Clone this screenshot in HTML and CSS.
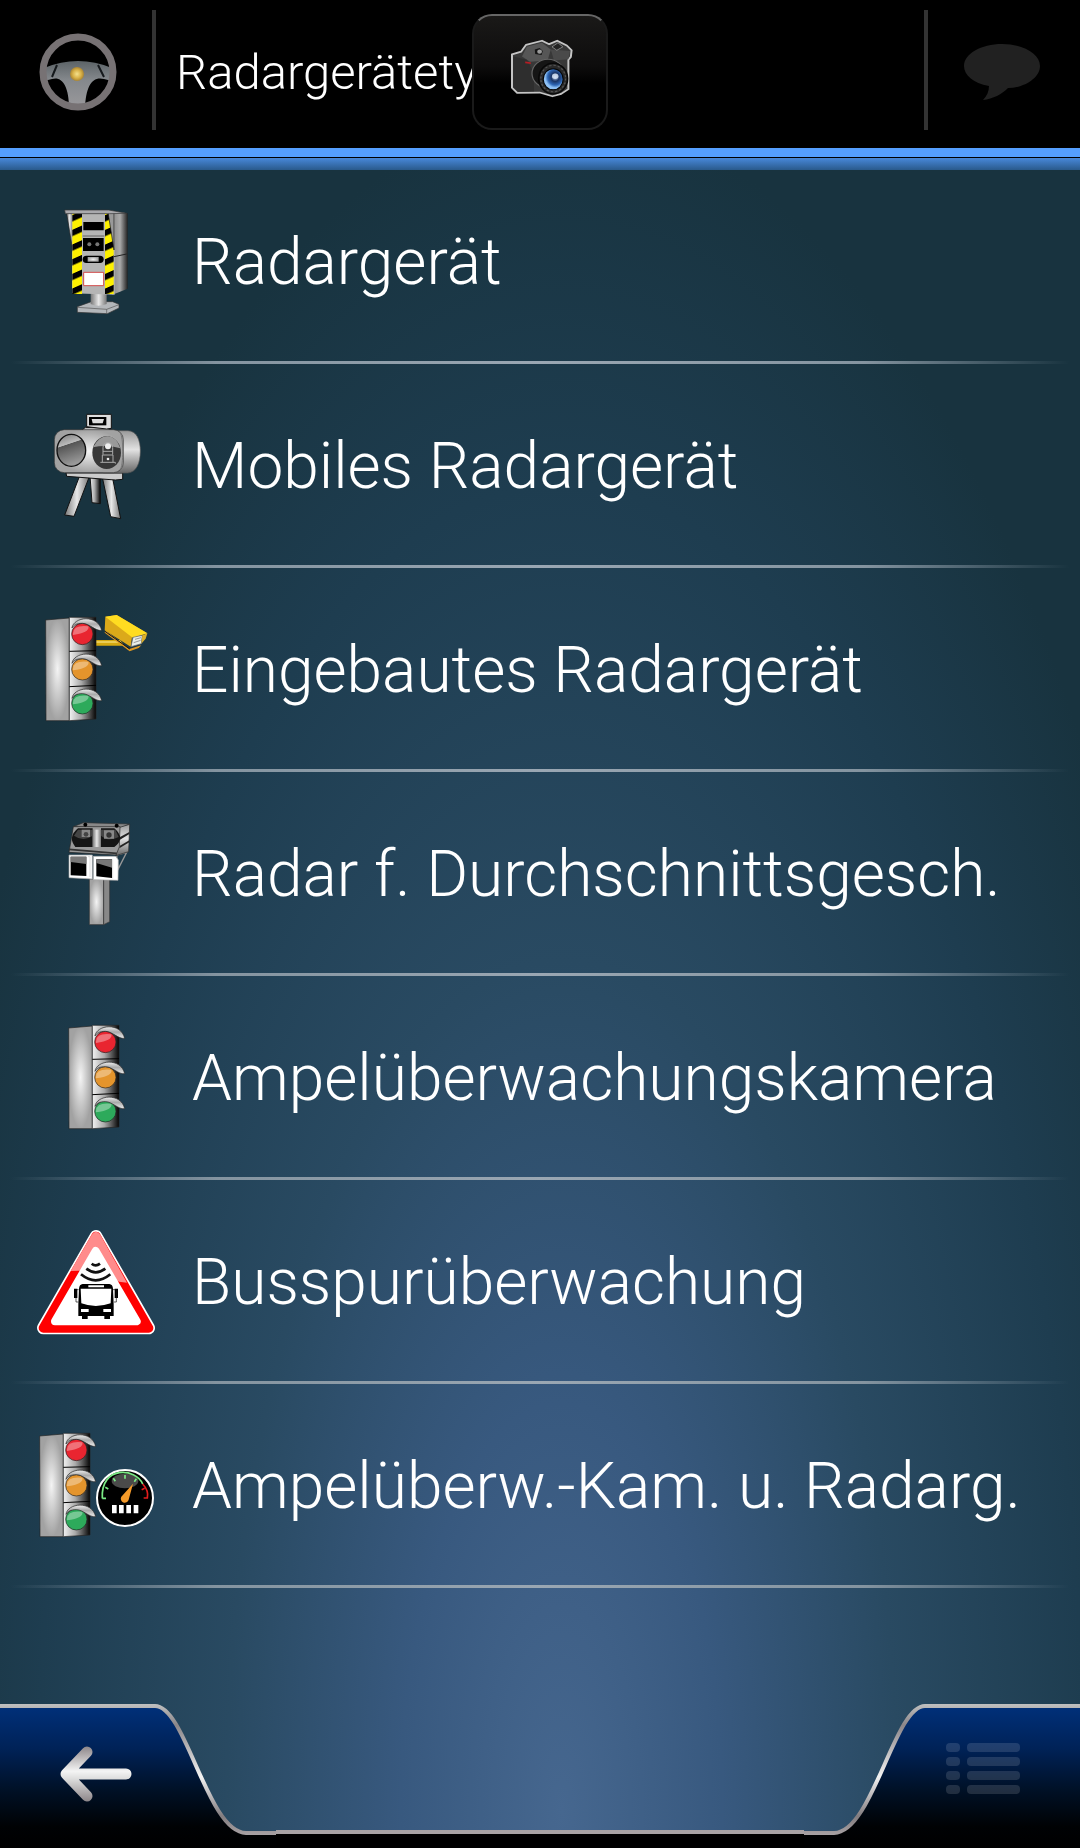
FILE: index.html
```
<!DOCTYPE html>
<html lang="de">
<head>
<meta charset="utf-8">
<meta name="viewport" content="width=device-width, initial-scale=1">
<title>Radargerätety</title>
<link rel="stylesheet" href="styles.css">
</head>
<body>
<svg class="defs" width="0" height="0" aria-hidden="true">
  <defs>
    <linearGradient id="steel"><stop offset="0" stop-color="#777"/><stop offset=".5" stop-color="#e8e8e8"/><stop offset="1" stop-color="#777"/></linearGradient>
    <linearGradient id="steelDark"><stop offset="0" stop-color="#f2f2f2"/><stop offset=".45" stop-color="#aaa"/><stop offset="1" stop-color="#050505"/></linearGradient>
    <linearGradient id="steelSide"><stop offset="0" stop-color="#222"/><stop offset=".2" stop-color="#888"/><stop offset=".6" stop-color="#aaa"/><stop offset="1" stop-color="#222"/></linearGradient>
    <linearGradient id="steelDown" x2="0" y2="1"><stop offset="0" stop-color="#999"/><stop offset=".45" stop-color="#e2e2e2"/><stop offset="1" stop-color="#666"/></linearGradient>
    <linearGradient id="glass" x2=".3" y2="1"><stop offset="0" stop-color="#777"/><stop offset=".38" stop-color="#bbb"/><stop offset=".4" stop-color="#555"/><stop offset="1" stop-color="#999"/></linearGradient>
    <radialGradient id="panel"><stop offset="0" stop-color="#f4f4f4"/><stop offset="1" stop-color="#a2a2a2"/></radialGradient>
    <linearGradient id="visor" x2="0" y2="1"><stop offset="0" stop-color="#eee"/><stop offset=".45" stop-color="#aaa"/><stop offset="1" stop-color="#eee"/></linearGradient>
    <linearGradient id="tab" x2="0" y2="1"><stop offset="0" stop-color="#00307a"/><stop offset=".3" stop-color="#002257"/><stop offset=".6" stop-color="#001025"/><stop offset=".85" stop-color="#000204"/><stop offset="1" stop-color="#000"/></linearGradient>
    <linearGradient id="rim" gradientUnits="userSpaceOnUse" x1="0" y1="0" x2="0" y2="132"><stop offset="0" stop-color="#c0c0c0"/><stop offset=".16" stop-color="#8b8689"/><stop offset=".55" stop-color="#f2f2f2"/><stop offset=".85" stop-color="#827c7f"/><stop offset="1" stop-color="#aaa4a6"/></linearGradient>
    <linearGradient id="arrow" gradientUnits="userSpaceOnUse" x1="0" y1="42" x2="0" y2="98"><stop offset="0" stop-color="#8b8487"/><stop offset=".45" stop-color="#f4f4f4"/><stop offset=".58" stop-color="#dedede"/><stop offset="1" stop-color="#8b8487"/></linearGradient>
    <linearGradient id="wheelBody" x2="0" y2="1"><stop offset="0" stop-color="#5c6367"/><stop offset=".4" stop-color="#84888c"/><stop offset="1" stop-color="#9a999c"/></linearGradient>
    <radialGradient id="hub"><stop offset="0" stop-color="#f4e08c"/><stop offset=".6" stop-color="#d8b148"/><stop offset="1" stop-color="#a98432"/></radialGradient>
    <radialGradient id="lens" cx=".6" cy=".4"><stop offset="0" stop-color="#b8cff0"/><stop offset=".4" stop-color="#1a3566"/><stop offset=".75" stop-color="#2d66b5"/><stop offset="1" stop-color="#8dc0f4"/></radialGradient>
    <pattern id="hazard" width="60" height="44" patternUnits="userSpaceOnUse" patternTransform="skewY(-24)"><rect width="60" height="44" fill="#fdf000"/><rect width="60" height="19" fill="#000"/></pattern>
    <g id="trafficLight" stroke="#222" stroke-width="2">
      <path d="M47 60 118 54V362H48z" fill="url(#panel)"/>
      <path d="M118 52H198V357L118 362z" fill="url(#steelDark)"/>
      <path d="M118 154 198 152M118 260 198 256" stroke="#000" stroke-width="3"/>
      <circle cx="157" cy="102" r="32" fill="#e92530"/><circle cx="157" cy="208" r="32" fill="#e4942c"/><circle cx="157" cy="310" r="32" fill="#2daa5b"/>
      <g fill="#fff" fill-opacity=".35" stroke="none"><path d="M129 100Q130 74 175 79Q181 97 129 105z"/><path d="M129 206Q130 180 175 185Q181 203 129 211z"/><path d="M129 308Q130 282 175 287Q181 305 129 313z"/></g>
      <g fill="url(#visor)"><path id="hood" d="M126 84C130 50 204 42 215 91C196 94 178 70 157 70C140 70 130 76 126 84z"/><use href="#hood" y="106"/><use href="#hood" y="211"/></g>
    </g>
  </defs>
</svg>

<header class="topbar">
  <button class="icon-button wheel" type="button" aria-label="Fahransicht">
    <svg width="80" height="80" viewBox="0 0 80 80">
      <path d="M6 36Q40 22 74 36V49L66 47C54 44 48 54 47 76H31C31 54 24 44 14 47L6 49z" fill="url(#wheelBody)"/>
      <path d="M19 33 14 45M60 33 66 45" stroke="#15191c" stroke-width="2"/>
      <circle cx="40" cy="40" r="35" fill="none" stroke="#777274" stroke-width="7"/>
      <circle cx="39" cy="42" r="7" fill="url(#hub)"/>
    </svg>
  </button>
  <h1 class="title">Radargerätety</h1>
  <button class="icon-button message" type="button" aria-label="Nachricht" disabled>
    <svg width="80" height="60" viewBox="0 0 80 60"><path d="M40 2C61 2 78 12 78 24C78 36 62 46 46 46C40 52 31 57 21 58C25 54 27 49 27 44C11 41 2 33 2 24C2 12 19 2 40 2z" fill="#212121"/></svg>
  </button>
  <button class="camera" type="button" aria-label="Bildschirmfoto">
    <svg width="68" height="60" viewBox="125 118 170 176" preserveAspectRatio="none">
      <path d="M135 166 158 158 170 138 210 126 228 136 248 126 272 140 284 154 282 174 276 182V268L258 282 236 289 204 278 148 279 135 264z" fill="#383838" stroke="#c4c4c4" stroke-width="5" stroke-linejoin="round"/>
      <path d="M172 144 210 132 232 152 224 184 180 188 160 172z" fill="#565656"/>
      <path d="M138 172 172 182 190 220V274L150 276 138 262z" fill="#2e2e2e"/>
      <path d="M232 152 280 156 276 180 240 184z" fill="#4a4a4a"/>
      <path d="M192 152 204 147 212 156 209 168 193 165z" fill="#141414"/><circle cx="204" cy="158" r="6" fill="#999"/>
      <path d="M235 144 250 132 262 144 247 154z" fill="#222" stroke="#999" stroke-width="2"/>
      <ellipse cx="225" cy="222" rx="40" ry="42" fill="#151515" stroke="#666" stroke-width="3"/>
      <ellipse cx="238" cy="237" rx="36" ry="45" fill="#292929" stroke="#080808" stroke-width="4"/>
      <ellipse cx="238" cy="237" rx="31" ry="39" fill="none" stroke="#555" stroke-width="3" stroke-dasharray="6 5"/>
      <ellipse cx="238" cy="239" rx="25" ry="31" fill="url(#lens)" stroke="#050505" stroke-width="3"/>
      <circle cx="243" cy="230" r="8" fill="#dce8f8" opacity=".8"/>
      <path d="M168 187 182 189V194L168 192z" fill="#b51d24"/>
    </svg>
  </button>
</header>

<main class="content">
  <ul class="types">
    <li><button class="type" type="button">
      <svg class="pic" viewBox="0 0 420 420" aria-hidden="true">
        <path d="M142 350 184 335H248L267 343V354L232 371 142 367z" fill="#b4b7ba" stroke="#333" stroke-width="2"/><path d="M142 352 230 358 267 344M230 358V370" fill="none" stroke="#555" stroke-width="2"/>
        <path d="M182 310H230V342Q205 352 182 342z" fill="url(#steel)"/>
        <path d="M236 62 293 70V296L247 314z" fill="url(#steelSide)"/>
        <path d="M110 70H128V180z" fill="url(#steel)" stroke="#222" stroke-width="2"/>
        <path d="M126 70H254V314L126 310z" fill="#b5b5b5"/>
        <path d="M127 70H156V312H127zM225 70H251V312H225z" fill="url(#hazard)"/>
        <path d="M234 66H252V180z" fill="#999" stroke="#111" stroke-width="2"/>
        <path d="M104 60H236L290 70 238 71H106z" fill="#a9a9ad" stroke="#333" stroke-width="2"/>
        <path d="M160 96H221V121H160zM159 144H221V183H159z" fill="#000"/><path d="M158 138H223" stroke="#777" stroke-width="4"/>
        <circle cx="178" cy="163" r="6" fill="#777"/><circle cx="202" cy="163" r="6" fill="#777"/>
        <rect x="158" y="197" width="63" height="22" rx="11"/><rect x="173" y="201" width="33" height="14" fill="url(#panel)"/>
        <path d="M161 247H221V287H161z" fill="#fff" stroke="#d34c4c" stroke-width="3"/>
        <path d="M252 200 290 192" stroke="#222" stroke-width="3"/>
      </svg>
      <span class="name">Radargerät</span></button></li>
    <li><button class="type" type="button">
      <svg class="pic" viewBox="0 -18 420 420" aria-hidden="true">
        <g stroke="#111" stroke-width="3"><path d="M180 228H211V311L186 308z" fill="url(#steelDark)"/><path d="M148 230H178L132 349 104 345z" fill="url(#steel)"/><path d="M217 232 248 235 272 356 242 350z" fill="url(#steel)"/>
        <path d="M108 219H278V238L256 240 110 229z" fill="#ccc"/><path d="M154 92 166 82 230 84 243 91z" fill="#bbb"/><path d="M170 43H244V85L230 87 170 80z" fill="#ddd"/></g>
        <path d="M177 51H229V76H177z"/><path d="M185 57H222L218 70H188z" fill="#ddd"/>
        <path d="M220 92H293C320 92 331 120 331 153C331 190 319 217 293 219H220z" fill="url(#steelDown)" stroke="#555" stroke-width="2"/>
        <rect x="73" y="89" width="207" height="129" rx="30" fill="url(#panel)" stroke="#333" stroke-width="2"/><path d="M270 98C281 108 281 200 270 209" fill="none" stroke="#777" stroke-width="3"/>
        <ellipse cx="124" cy="151" rx="43" ry="48" fill="url(#glass)" stroke="#111" stroke-width="4"/>
        <ellipse cx="230" cy="158" rx="43" ry="49" fill="#383838"/><path d="M189 142Q208 107 234 109Q260 111 271 145Q230 133 189 142z" fill="#999"/>
        <g fill="none" stroke="#aaa" stroke-width="3"><path d="M219 164V143Q219 128 234 128Q248 128 248 143V164M211 187H256V191M217 187V165H249V187M219 154H248"/></g><circle cx="234" cy="139" r="9" fill="#eee"/><circle cx="234" cy="177" r="4" fill="#eee"/>
      </svg>
      <span class="name">Mobiles Radargerät</span></button></li>
    <li><button class="type" type="button">
      <svg class="pic" viewBox="0 -6 420 420" aria-hidden="true">
        <path d="M198 120H270L284 137H198z" fill="#d6aa10"/><path d="M198 126H272" stroke="#fff09c" stroke-width="3"/>
        <use href="#trafficLight"/>
        <path d="M226 91 298 147 334 136 326 144 299 154 224 98z" fill="#dd9822"/><path d="M225 94 299 147" stroke="#111" stroke-width="3"/>
        <path d="M226 50 260 45 352 100 306 112 302 140 224 91z" fill="#dba91a"/><path d="M226 50 260 45 352 100 308 113z" fill="#ffdc21"/>
        <path d="M309 112 337 106 334 131 303 140z" fill="#e9eee8" stroke="#666" stroke-width="2"/><path d="M315 118 333 113M311 128 332 121" stroke="#999" stroke-width="3"/><path d="M337 106 352 100 347 116 334 131z" fill="#ddb02a"/>
      </svg>
      <span class="name">Eingebautes Radargerät</span></button></li>
    <li><button class="type" type="button">
      <svg class="pic" viewBox="0 -9 420 420" aria-hidden="true">
        <path d="M178 222H221V359H178z" fill="url(#panel)" stroke="#333" stroke-width="2"/><path d="M221 222H239V350L221 359z" fill="#888" stroke="#333" stroke-width="2"/>
        <path d="M260 150 290 142 264 193z" fill="none" stroke="#999" stroke-width="4"/>
        <path d="M130 65 160 53 298 57 270 70z" fill="#888" stroke="#333" stroke-width="2"/><path d="M266 68 299 58 296 140 258 152z" fill="url(#steelDown)" stroke="#222" stroke-width="2"/><path d="M270 96 298 81V87L270 104zM270 122 298 106V112L268 130z" fill="#222"/>
        <path d="M130 65H270L268 126 258 150 117 142z" fill="#999" stroke="#222" stroke-width="2"/>
        <path d="M144 70H188V126H136Q112 96 144 70zM213 70H253Q288 101 253 126H213z" fill="#151515"/>
        <path d="M144 74H188V92Q160 112 132 92zM213 74H256L266 96Q236 112 213 92z" fill="#444"/>
        <path d="M155 74H180V96H155zM222 76H252V101H222z" fill="#888"/><circle cx="168" cy="88" r="7" fill="#444"/><circle cx="237" cy="90" r="8" fill="#333"/><path d="M188 74H213V126H188z" fill="url(#steel)"/>
        <path d="M117 133 260 145" stroke="#333" stroke-width="5"/><circle cx="166" cy="59" r="6"/><circle cx="260" cy="62" r="6"/>
        <path d="M117 150H187V222L117 218zM190 154H257L265 165 264 226 190 224z" fill="#fff" stroke="#aaa" stroke-width="2"/>
        <path d="M122 155H169V213L122 211zM199 163H246V219L199 214z"/><path d="M122 155H169V177L122 171zM199 163H246V188L199 174z" fill="#777"/><path d="M174 155H180V216M248 163V220" stroke="#ddd" stroke-width="3" fill="none"/>
      </svg>
      <span class="name">Radar f. Durchschnittsgesch.</span></button></li>
    <li><button class="type" type="button">
      <svg class="pic" viewBox="0 -12 420 420" aria-hidden="true"><use href="#trafficLight" x="69" y="-6"/></svg>
      <span class="name">Ampelüberwachungskamera</span></button></li>
    <li><button class="type" type="button">
      <svg class="pic" viewBox="0 -15 420 420" aria-hidden="true">
        <path d="M198 64 356 339H40z" fill="#fff" stroke="#fff" stroke-width="38" stroke-linejoin="round"/>
        <path d="M198 64 356 339H40z" fill="#f00" stroke="#f00" stroke-width="28" stroke-linejoin="round"/>
        <path d="M122 168Q207 162 267 200L291 203 211 59Q198 42 185 59z" fill="#ff8b8b"/>
        <path d="M197 108 320 319H75z" fill="#fff" stroke="#fff" stroke-width="24" stroke-linejoin="round"/>
        <g fill="none" stroke="#111" stroke-width="8"><path d="M185 146Q197 156 210 146M169 161Q197 183 226 161M153 178Q197 214 241 178"/></g>
        <path d="M158 207H238Q248 208 249 221L251 268V303H240V312H223V303H173V312H156V303H145V268L147 221Q148 208 158 207z"/>
        <path d="M152 221H244L242 265Q197 281 154 265zM175 211H222V217H175z" fill="#fff"/><path d="M153 282H176V291H153zM220 282H243V291H220z" fill="#fff"/>
        <path d="M132 221H142V249H132zM254 221H264V249H254z"/><path d="M146 224H138V261H145M249 224H259V261H252" fill="none" stroke="#111" stroke-width="2"/>
      </svg>
      <span class="name">Busspurüberwachung</span></button></li>
    <li><button class="type" type="button">
      <svg class="pic" viewBox="0 -18 420 420" aria-hidden="true">
        <use href="#trafficLight" x="-18" y="-12"/>
        <circle cx="285" cy="234" r="84" fill="#000" stroke="#fff" stroke-width="6"/><ellipse cx="285" cy="183" rx="40" ry="22" fill="#4a4a4a"/>
        <path d="M217 235C211 136 318 143 338 192M217 235H228M226 202 235 207M250 175 256 184M285 165V176M319 176 313 185" fill="none" stroke="#7bea85" stroke-width="5"/>
        <path d="M338 192Q357 212 352 234H341M344 205 335 209" fill="none" stroke="#e21d1d" stroke-width="5"/>
        <path d="M309 191 274 230A12 12 0 1 0 296 239z" fill="#f59a29"/>
        <path d="M246 255H260V280H246zM267 255H281V280H267zM289 255H303V280H289zM311 255H325V280H311z" fill="#fff"/>
      </svg>
      <span class="name">Ampelüberw.-Kam. u. Radarg.</span></button></li>
  </ul>
</main>

<footer class="bottombar">
  <button class="tab" type="button" aria-label="Zurück">
    <svg width="276" height="144" viewBox="0 0 276 144">
      <path d="M0 2H155C186 2 207 128 246 129H276V144H0z" fill="url(#tab)"/>
      <path d="M0 2H155C186 2 207 128 246 129H276" fill="none" stroke="url(#rim)" stroke-width="4"/>
      <path d="M87 48 66 70 87 92M68 70H126" fill="none" stroke="url(#arrow)" stroke-width="11" stroke-linecap="round" stroke-linejoin="round"/>
    </svg>
  </button>
  <div class="sill"></div>
  <button class="tab" type="button" aria-label="Menü" disabled>
    <svg width="276" height="144" viewBox="0 0 276 144">
      <path d="M276 2H121C90 2 69 128 30 129H0V144H276z" fill="url(#tab)"/>
      <path d="M276 2H121C90 2 69 128 30 129H0" fill="none" stroke="url(#rim)" stroke-width="4"/>
      <g fill="#fff" fill-opacity=".13"><rect x="142" y="39" width="14" height="9" rx="4"/><rect x="163" y="39" width="53" height="9" rx="4"/><rect x="142" y="53" width="14" height="9" rx="4"/><rect x="163" y="53" width="53" height="9" rx="4"/><rect x="142" y="67" width="14" height="9" rx="4"/><rect x="163" y="67" width="53" height="9" rx="4"/><rect x="142" y="81" width="14" height="9" rx="4"/><rect x="163" y="81" width="53" height="9" rx="4"/></g>
    </svg>
  </button>
</footer>
</body>
</html>
```
FILE: styles.css
```
* {
  box-sizing: border-box;
}

body {
  margin: 0;
  min-height: 100vh;
  display: flex;
  flex-direction: column;
  font-family: Roboto, "Noto Sans", sans-serif;
  font-weight: 300;
  color: #fff;
  background: radial-gradient(ellipse 62% 92% at 52% 98%, #46678f 0%, #38597f 24%, #294a62 50%, #1e3d50 78%, #18333f 100%);
}

button {
  margin: 0;
  padding: 0;
  border: 0;
  background: none;
  color: inherit;
  font: inherit;
  cursor: pointer;
}

svg {
  display: block;
}

.defs {
  position: absolute;
}

.topbar {
  position: relative;
  display: flex;
  align-items: center;
  height: 158px;
  padding-bottom: 18px;
  background: linear-gradient(#559fff, #559fff) bottom 1px left 0 / 100% 9px no-repeat, #000;
}

.topbar::after {
  content: "";
  position: absolute;
  top: 100%;
  left: 0;
  right: 0;
  height: 12px;
  background: linear-gradient(#4888da, #2a5a8c);
}

.icon-button {
  display: flex;
  align-items: center;
  justify-content: center;
  height: 120px;
  padding-top: 4px;
}

.wheel {
  width: 156px;
  padding-left: 4px;
  border-right: 4px solid #333;
}

.message {
  width: 156px;
  padding-right: 4px;
  border-left: 4px solid #333;
}

.title {
  flex: 1;
  margin: 0;
  padding-top: 6px;
  padding-left: 20px;
  font-size: 49px;
  line-height: 64px;
  font-weight: 300;
  white-space: nowrap;
  overflow: hidden;
}

.camera {
  position: absolute;
  top: 14px;
  left: 50%;
  display: flex;
  align-items: center;
  justify-content: center;
  width: 136px;
  height: 116px;
  margin-left: -68px;
  padding-left: 4px;
  padding-bottom: 8px;
  border: 2px solid #1a1a1a;
  border-top-color: #666;
  border-radius: 20px;
  background: linear-gradient(#1a1918, #0d0c0c 45%, #000 60%);
}

.content {
  flex: 1;
  padding-top: 2px;
}

.types {
  margin: 0;
  padding: 0;
  list-style: none;
}

.type {
  display: flex;
  align-items: center;
  gap: 22px;
  width: 100%;
  height: 204px;
  padding-left: 30px;
  text-align: left;
  background: linear-gradient(90deg, transparent 1%, #8494a0 20%, #9aa7b3 50%, #8494a0 80%, transparent 99%) bottom / 100% 3px no-repeat;
}

.pic {
  flex: none;
  width: 140px;
  height: 140px;
  margin-bottom: 4px;
}

.name {
  padding-top: 2px;
  font-size: 64px;
  line-height: 80px;
  white-space: nowrap;
}

.bottombar {
  display: flex;
  align-items: flex-end;
}

.tab {
  flex: none;
}

.sill {
  flex: 1;
  height: 18px;
  border-top: 4px solid #a9a3a5;
  background: #000;
}
```
